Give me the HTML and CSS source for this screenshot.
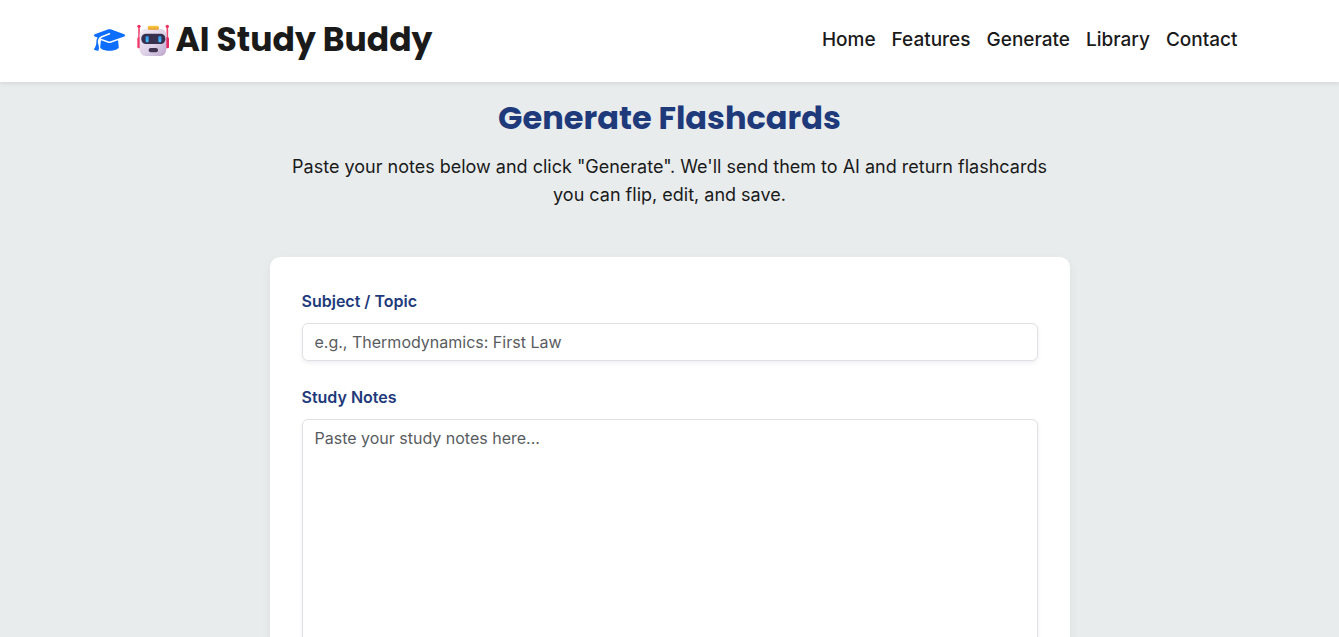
FILE: index.html
```html
<!DOCTYPE html>
<html lang="en">
<head>
<meta charset="utf-8">
<meta name="viewport" content="width=device-width, initial-scale=1">
<title>AI Study Buddy</title>
<link rel="stylesheet" href="styles.css">
</head>
<body>
<header class="site-header">
  <div class="header-inner">
    <div class="brand">
      <svg class="brand-cap" viewBox="0 0 640 512" aria-hidden="true"><path fill="currentColor" d="M320 32c-8.1 0-16.1 1.4-23.7 4.1L15.8 137.4C6.3 140.9 0 149.9 0 160s6.3 19.1 15.8 22.6l57.9 20.9C57.3 229.3 48 259.8 48 291.9v28.1c0 28.4-10.8 57.7-22.3 80.8c-6.5 13-13.9 25.8-22.5 37.6C0 442.7-.9 448.3 .9 453.4s6 8.9 11.2 10.2l64 16c4.2 1.1 8.7 .3 12.4-2s6.3-6.1 7.1-10.4c8.6-42.8 4.3-81.2-2.1-108.7C90.3 344.3 86 329.8 80 316.5V291.9c0-30.2 10.2-58.7 27.9-81.5c12.9-15.5 29.6-28 49.2-35.7l157-61.7c8.2-3.2 17.5 .8 20.7 9s-.8 17.5-9 20.7l-157 61.7c-12.4 4.9-23.3 12.4-32.2 21.6l159.6 57.6c7.6 2.7 15.6 4.1 23.7 4.1s16.1-1.4 23.7-4.1L624.2 182.6c9.5-3.4 15.8-12.5 15.8-22.6s-6.3-19.1-15.8-22.6L343.7 36.1C336.1 33.4 328.1 32 320 32zM128 408c0 35.3 86 72 192 72s192-36.7 192-72L496.7 262.6 354.5 314c-11.1 4-22.8 6-34.5 6s-23.5-2-34.5-6L143.3 262.6 128 408z"/></svg>
      <svg class="brand-robot" viewBox="0 0 99 99" aria-hidden="true">
        <defs>
          <linearGradient id="face" x1="0" y1="0" x2="1" y2="1"><stop offset="0" stop-color="#f1e9f3"/><stop offset=".55" stop-color="#ddd2e8"/><stop offset="1" stop-color="#bba4cb"/></linearGradient>
          <linearGradient id="gold" x1="0" y1="0" x2="0" y2="1"><stop offset="0" stop-color="#ffd04a"/><stop offset="1" stop-color="#e39a25"/></linearGradient>
          <linearGradient id="eye" x1="0" y1="0" x2="0" y2="1"><stop offset="0" stop-color="#2f8fe8"/><stop offset="1" stop-color="#45c7ff"/></linearGradient>
        </defs>
        <path d="M6 8v54M91 8v54" stroke="#ee4a74" stroke-width="5"/>
        <circle cx="6" cy="7" r="5" fill="#f0325f"/><circle cx="91" cy="7" r="5" fill="#f0325f"/>
        <rect x="1" y="40" width="12" height="33" rx="4" fill="#f33a68"/>
        <rect x="84" y="40" width="12" height="33" rx="4" fill="#e52a63"/>
        <rect x="8" y="14" width="80" height="82" rx="19" fill="url(#face)"/>
        <rect x="32" y="5" width="34" height="12" rx="5" fill="url(#gold)"/>
        <rect x="13" y="29" width="72" height="31" rx="14" fill="#37304f"/>
        <rect x="26" y="36" width="9" height="19" rx="4" fill="url(#eye)"/>
        <rect x="64" y="36" width="9" height="19" rx="4" fill="url(#eye)"/>
        <rect x="35" y="72" width="28" height="13" rx="6" fill="#403452"/>
      </svg>
      <span class="brand-name">AI Study Buddy</span>
    </div>
    <nav class="site-nav" aria-label="Main">
      <a href="#home">Home</a>
      <a href="#features">Features</a>
      <a href="#generate">Generate</a>
      <a href="#library">Library</a>
      <a href="#contact">Contact</a>
    </nav>
  </div>
</header>
<main class="generate" id="generate">
  <div class="intro">
    <h1>Generate Flashcards</h1>
    <p>Paste your notes below and click "Generate". We'll send them to AI and return flashcards you can flip, edit, and save.</p>
  </div>
  <form class="card">
    <div class="field">
      <label for="subject">Subject / Topic</label>
      <input class="control" id="subject" type="text" placeholder="e.g., Thermodynamics: First Law">
    </div>
    <div class="field">
      <label for="notes">Study Notes</label>
      <textarea class="control" id="notes" rows="12" placeholder="Paste your study notes here..."></textarea>
    </div>
  </form>
</main>
</body>
</html>
```

FILE: styles.css
```css
*, *::before, *::after {
  box-sizing: border-box;
}

body {
  margin: 0;
  background: #e8eced;
  color: #1a1a1a;
  font-family: Inter, "Liberation Sans", sans-serif;
  font-size: 16px;
  line-height: 24px;
}

.site-header {
  position: relative;
  background: #fff;
  box-shadow: 0 2px 4px rgba(0, 0, 0, 0.08);
}

.header-inner {
  display: flex;
  align-items: center;
  justify-content: space-between;
  max-width: 1200px;
  margin: 0 auto;
  padding: 15px 24px 17px;
}

.brand {
  display: flex;
  align-items: center;
  line-height: 50px;
}

.brand-cap {
  width: 31px;
  height: 26px;
  margin-right: 12px;
  color: #0d6efd;
}

.brand-robot {
  width: 33px;
  height: 33px;
  margin-right: 6px;
}

.brand-name,
.intro h1 {
  font-family: Poppins, Inter, "Liberation Sans", sans-serif;
  font-weight: 700;
}

.brand-name {
  font-size: 33px;
}

.site-nav {
  display: flex;
}

.site-nav a {
  padding: 0 8px;
  color: inherit;
  font-size: 19px;
  font-weight: 500;
  text-decoration: none;
}

.generate {
  max-width: 800px;
  margin: 0 auto;
  padding: 16px 0 48px;
}

.intro {
  padding: 0 16px;
  margin-bottom: 48px;
  text-align: center;
}

.intro h1 {
  margin: 0 0 16px;
  color: #1e3a7b;
  font-size: 32px;
  line-height: 39px;
}

.intro p {
  margin: 0;
  font-size: 18px;
  line-height: 28px;
}

.card {
  display: flex;
  flex-direction: column;
  gap: 24px;
  padding: 32px;
  border-radius: 10px;
  background: #fff;
  box-shadow: 0 4px 12px rgba(0, 0, 0, 0.05);
}

.field {
  display: flex;
  flex-direction: column;
  gap: 10px;
}

.field label {
  color: #1e3a7b;
  font-weight: 600;
}

.control {
  width: 100%;
  padding: 6px 12px;
  border: 1px solid #dee2e6;
  border-radius: 6px;
  background: #fff;
  box-shadow: 0 2px 4px rgba(0, 0, 0, 0.07);
  color: #212529;
  font: inherit;
  line-height: 24px;
}

.control::placeholder {
  color: #595c5f;
  opacity: 1;
}

textarea.control {
  resize: vertical;
}
```
